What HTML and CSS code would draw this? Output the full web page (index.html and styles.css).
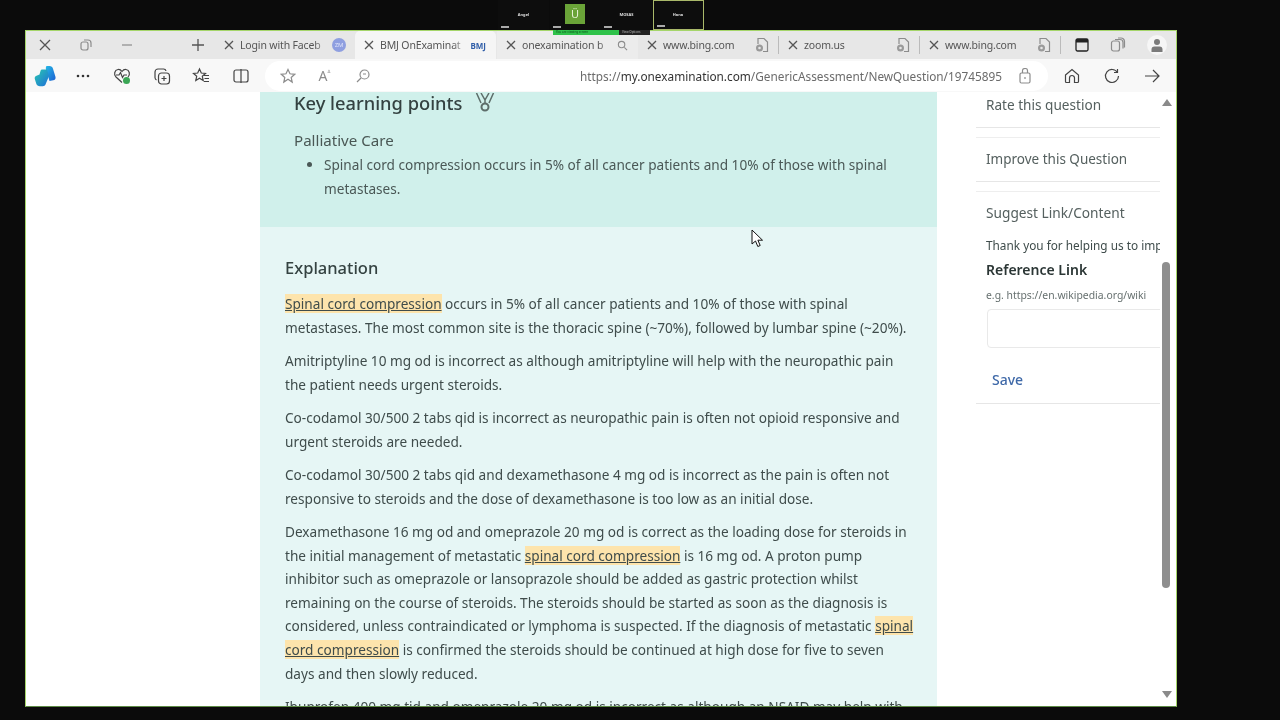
FILE: index.html
```html
<!DOCTYPE html>
<html lang="en">
<head>
<meta charset="utf-8">
<title>BMJ OnExamination</title>
<link rel="stylesheet" href="styles.css">
</head>
<body>
<div class="screen">
  <div class="gallery">
    <div class="thumb"><span class="tname">Angel</span></div>
    <div class="thumb"><span class="tile">Ü</span></div>
    <div class="thumb"><span class="tname">MOSAS</span></div>
    <div class="thumb thumb-on"><span class="tname">Hana</span></div>
  </div>
  <div class="share-bar"><span class="share-green">You are viewing screen</span><span class="share-black">View Options</span></div>
  <div class="window">
    <div class="tabstrip">
      <div class="ctl ctl-x"><svg width="12" height="12" viewBox="0 0 12 12"><path d="M1 1l10 10M11 1L1 11" class="ic"/></svg></div>
      <div class="ctl ctl-r"><svg width="12" height="12" viewBox="0 0 12 12"><rect x="1" y="3" width="7" height="8" rx="2" class="ic-l"/><path d="M4 1h4a3 3 0 0 1 3 3v4" class="ic-l"/></svg></div>
      <div class="ctl ctl-m"><svg width="12" height="12" viewBox="0 0 12 12"><path d="M1 6h10" class="ic-l"/></svg></div>
      <div class="ctl ctl-new"><svg width="14" height="14" viewBox="0 0 14 14"><path d="M7 1v12M1 7h12" class="ic"/></svg></div>
      <div class="tab tab-a"><svg class="tx" width="10" height="10" viewBox="0 0 10 10"><path d="M1 1l8 8M9 1L1 9" class="ic"/></svg><span class="tl">Login with Faceb</span><span class="fav-zm">ZM</span></div>
      <div class="tab tab-on"><svg class="tx" width="10" height="10" viewBox="0 0 10 10"><path d="M1 1l8 8M9 1L1 9" class="ic"/></svg><span class="tl">BMJ OnExaminat</span><span class="fav-bmj">BMJ</span></div>
      <div class="tab tab-c"><svg class="tx" width="10" height="10" viewBox="0 0 10 10"><path d="M1 1l8 8M9 1L1 9" class="ic"/></svg><span class="tl">onexamination b</span><svg width="11" height="11" viewBox="0 0 12 12"><circle cx="5" cy="5" r="3.5" class="ic-l"/><path d="M8 8l3 3" class="ic-l"/></svg></div>
      <div class="tab"><svg class="tx" width="10" height="10" viewBox="0 0 10 10"><path d="M1 1l8 8M9 1L1 9" class="ic"/></svg><span class="tl">www.bing.com</span><svg width="14" height="16" viewBox="0 0 14 16"><path d="M3 7V1.500h6l3.500 3.500v9.500H8" class="ic-l"/><circle cx="4.500" cy="11" r="3.500" fill="#9a9a9a"/><circle cx="4.500" cy="11" r="1.300" fill="#e6e6e6"/></svg></div>
      <div class="tab"><svg class="tx" width="10" height="10" viewBox="0 0 10 10"><path d="M1 1l8 8M9 1L1 9" class="ic"/></svg><span class="tl">zoom.us</span><svg width="14" height="16" viewBox="0 0 14 16"><path d="M3 7V1.500h6l3.500 3.500v9.500H8" class="ic-l"/><circle cx="4.500" cy="11" r="3.500" fill="#9a9a9a"/><circle cx="4.500" cy="11" r="1.300" fill="#e6e6e6"/></svg></div>
      <div class="tab"><svg class="tx" width="10" height="10" viewBox="0 0 10 10"><path d="M1 1l8 8M9 1L1 9" class="ic"/></svg><span class="tl">www.bing.com</span><svg width="14" height="16" viewBox="0 0 14 16"><path d="M3 7V1.500h6l3.500 3.500v9.500H8" class="ic-l"/><circle cx="4.500" cy="11" r="3.500" fill="#9a9a9a"/><circle cx="4.500" cy="11" r="1.300" fill="#e6e6e6"/></svg></div>
      <div class="strip-end">
        <svg width="14" height="14" viewBox="0 0 14 14"><rect x="1" y="1" width="12" height="12" rx="1.500" fill="none" stroke="#222" stroke-width="1.300"/><rect x="1" y="1" width="12" height="3.500" fill="#222"/></svg>
        <svg width="16" height="16" viewBox="0 0 16 16"><rect x="1.500" y="4" width="8" height="10" rx="2" class="ic-l"/><path d="M5 2.500h5a3 3 0 0 1 3 3v6M8 1h3a3.500 3.500 0 0 1 3.500 3.500v6" class="ic-l"/></svg>
        <span class="avatar"><svg width="12" height="14" viewBox="0 0 12 14"><circle cx="6" cy="4" r="3" fill="#7b7b7b"/><path d="M0.500 14v-2.500a3 3 0 0 1 3-3h5a3 3 0 0 1 3 3V14z" fill="#7b7b7b"/></svg></span>
      </div>
    </div>
    <div class="toolbar">
      <div class="tb tb-first"><svg width="22" height="22" viewBox="0 0 22 22"><defs><linearGradient id="cpa" x1="0" y1="0" x2="1" y2="1"><stop offset="0" stop-color="#25b8e6"/><stop offset="1" stop-color="#1b5fd1"/></linearGradient><linearGradient id="cpb" x1="0" y1="0" x2="1" y2="1"><stop offset="0" stop-color="#28c8b0"/><stop offset="1" stop-color="#1f6fd8"/></linearGradient></defs><path d="M12.500 1h3c1.800 0 3 1 3.500 2.800L21.500 12c.4 1.700-.6 3-2.300 3.300L15.500 16 12 4.500C11.700 3 11.800 1.800 12.500 1z" fill="url(#cpa)"/><path d="M8 4.500h5L15 11l-3.500 8.500c-.5 1-1.500 1.700-2.700 1.700H6c-2 0-3.200-1-3.800-2.800L.8 14c-.4-1.500.3-2.700 1.700-3.300L5.500 9.500 6.500 6C6.800 5 7.300 4.500 8 4.500z" fill="url(#cpb)"/></svg></div>
      <div class="tb"><svg width="14" height="4" viewBox="0 0 14 4"><circle cx="2" cy="2" r="1.300" fill="#333"/><circle cx="7" cy="2" r="1.300" fill="#333"/><circle cx="12" cy="2" r="1.300" fill="#333"/></svg></div>
      <div class="tb"><svg width="18" height="18" viewBox="0 0 18 18"><path d="M9 15.500L3 10C.5 7.500 1.500 3 5 2.500c1.700-.2 3 .6 4 2 1-1.400 2.300-2.200 4-2 3.500.5 4.500 5 2 7.500" class="ic-d"/><path d="M3 8h3l1.500-2.500 2 5L11 8h3" class="ic-d"/><circle cx="13.500" cy="13.500" r="3.500" fill="#3aa655"/></svg></div>
      <div class="tb"><svg width="18" height="18" viewBox="0 0 18 18"><rect x="5.500" y="6" width="11" height="11" rx="3" class="ic-d"/><path d="M11 9v5M8.500 11.500h5M3.500 13a3 3 0 0 1-1.500-2.500V5a3 3 0 0 1 3-3h5.500A2.500 2.500 0 0 1 13 4" class="ic-d"/></svg></div>
      <div class="tb"><svg width="18" height="18" viewBox="0 0 18 18"><path d="M7.500 2l1.800 4 4.200.4-3.200 2.900.9 4.200-3.700-2.200-3.700 2.200.9-4.200L1.500 6.400 5.700 6z" class="ic-d"/><path d="M12 8.500h5M12.500 11.500h4.500M12 14.500h5" class="ic-d"/></svg></div>
      <div class="tb"><svg width="18" height="18" viewBox="0 0 18 18"><rect x="2" y="3" width="14" height="12" rx="2" class="ic-d"/><path d="M9 2v14" class="ic-d"/></svg></div>
      <div class="address">
        <div class="addr-left">
          <svg width="16" height="16" viewBox="0 0 16 16"><path d="M8 1.500l2 4.300 4.700.5-3.500 3.200 1 4.600L8 11.300l-4.200 2.800 1-4.600L1.300 6.300 6 5.800z" class="ic-l"/></svg>
          <span class="read-a">A<sup class="read-s">ᐞ</sup></span>
          <svg width="14" height="14" viewBox="0 0 14 14"><circle cx="8.500" cy="5.500" r="4.500" class="ic-l"/><path d="M5 9l-4 4M7 5h3" class="ic-l"/></svg>
        </div>
        <div class="url">https://<b>my.onexamination.com</b>/GenericAssessment/NewQuestion/19745895</div>
        <svg class="lock" width="12" height="16" viewBox="0 0 12 16"><rect x="1" y="5" width="10" height="10" rx="1.500" class="ic-l"/><path d="M3.500 5V2.500a2.500 2 0 0 1 5 0V5M6 9v2" class="ic-l"/></svg>
      </div>
      <div class="tb tb-r"><svg width="16" height="16" viewBox="0 0 16 16"><path d="M1.500 7L8 1.500 14.500 7v6.500a1 1 0 0 1-1 1h-3V10a2.500 2.500 0 0 0-5 0v4.500h-3a1 1 0 0 1-1-1z" class="ic-d"/></svg></div>
      <div class="tb tb-r"><svg width="16" height="16" viewBox="0 0 16 16"><path d="M13.500 4.500A6.500 6.500 0 1 0 14.500 8M13.500 1v3.500H10" class="ic-d"/></svg></div>
      <div class="tb tb-r"><svg width="16" height="14" viewBox="0 0 16 14"><path d="M1 7h14M9 1l6 6-6 6" class="ic-d"/></svg></div>
    </div>
    <div class="viewport">
      <div class="gutter"></div>
      <main class="main">
        <section class="key">
          <h2 class="key-h">Key learning points <svg class="medal" width="20" height="20" viewBox="0 0 20 20"><path d="M1.500 0l4.500 10M18.500 0L14 10M6 0l4 7 4-7M10 7v3" fill="none" stroke="#5d6d6a" stroke-width="1.500"/><circle cx="10" cy="14" r="3.500" fill="none" stroke="#5d6d6a" stroke-width="2"/></svg></h2>
          <p class="key-sub">Palliative Care</p>
          <ul class="key-list"><li>Spinal cord compression occurs in 5% of all cancer patients and 10% of those with spinal metastases.</li></ul>
        </section>
        <section class="expl">
          <h3 class="expl-h">Explanation</h3>
          <p><span class="hl">Spinal cord compression</span> occurs in 5% of all cancer patients and 10% of those with spinal metastases. The most common site is the thoracic spine (~70%), followed by lumbar spine (~20%).</p>
          <p>Amitriptyline 10 mg od is incorrect as although amitriptyline will help with the neuropathic pain the patient needs urgent steroids.</p>
          <p>Co-codamol 30/500 2 tabs qid is incorrect as neuropathic pain is often not opioid responsive and urgent steroids are needed.</p>
          <p>Co-codamol 30/500 2 tabs qid and dexamethasone 4 mg od is incorrect as the pain is often not responsive to steroids and the dose of dexamethasone is too low as an initial dose.</p>
          <p>Dexamethasone 16 mg od and omeprazole 20 mg od is correct as the loading dose for steroids in the initial management of metastatic <span class="hl">spinal cord compression</span> is 16 mg od. A proton pump inhibitor such as omeprazole or lansoprazole should be added as gastric protection whilst remaining on the course of steroids. The steroids should be started as soon as the diagnosis is considered, unless contraindicated or lymphoma is suspected. If the diagnosis of metastatic <span class="hl">spinal cord compression</span> is confirmed the steroids should be continued at high dose for five to seven<br>days and then slowly reduced.</p>
          <p>Ibuprofen 400 mg tid and omeprazole 20 mg od is incorrect as although an NSAID may help with</p>
        </section>
      </main>
      <aside class="side">
        <div class="card card-first">Rate this question</div>
        <div class="card">Improve this Question</div>
        <div class="card card-form">
          <div class="card-title">Suggest Link/Content</div>
          <div class="thanks">Thank you for helping us to improve</div>
          <div class="ref">Reference Link</div>
          <div class="eg">e.g. https://en.wikipedia.org/wiki</div>
          <div class="input"></div>
          <div class="save">Save</div>
        </div>
      </aside>
      <div class="scrollbar">
        <span class="arrow-up"></span>
        <span class="thumbbar"></span>
        <span class="arrow-down"></span>
      </div>
      <svg class="cursor" width="13" height="19" viewBox="0 0 13 19"><path d="M1 1v14l3.500-3 2.300 5.500 2.400-1-2.300-5.300H11.500z" fill="#fff" stroke="#111" stroke-width="1"/></svg>
    </div>
  </div>
</div>
</body>
</html>
```
FILE: styles.css
```css
* { box-sizing: border-box; }
html, body { margin: 0; padding: 0; background: #0b0b0b; }
body { width: 1280px; height: 720px; overflow: hidden; font-family: "Noto Sans", "Liberation Sans", sans-serif; color: #3d4a49; }
.screen { position: relative; width: 1280px; height: 720px; background: #0b0b0b; filter: blur(0.45px); }

.gallery { display: flex; height: 30px; padding-left: 498px; }
.thumb { position: relative; width: 51px; height: 30px; display: flex; align-items: center; justify-content: center; background: #0d0d0d; margin-right: 0.5px; padding-bottom: 1px; }
.thumb::after { content: ""; position: absolute; left: 3px; bottom: 2px; width: 8px; height: 2px; background: #aaa; }
.thumb-on { border: 1px solid #a9b86a; }
.tname { font-size: 4px; font-weight: 700; color: #ddd; }
.tile { width: 20px; height: 20px; background: #6aa338; color: #e8f3d8; font-size: 11px; line-height: 20px; text-align: center; margin-bottom: 1px; }
.share-bar { position: absolute; left: 553px; top: 30px; display: flex; height: 5px; font-size: 3px; line-height: 5px; z-index: 2; }
.share-green { width: 66px; background: #2fc24a; color: #0d4d1c; padding-left: 3px; white-space: nowrap; overflow: hidden; }
.share-black { width: 31px; background: #222; color: #bbb; padding-left: 3px; white-space: nowrap; overflow: hidden; }

.window { margin-left: 25px; width: 1152px; height: 677px; border: 1px solid #a5d56a; border-bottom-color: #5d8a45; background: #fff; display: flex; flex-direction: column; overflow: hidden; }
.ic { fill: none; stroke: #555; stroke-width: 1.300; }
.ic-l { fill: none; stroke: #8c8c8c; stroke-width: 1.200; }
.ic-d { fill: none; stroke: #444; stroke-width: 1.200; }

.tabstrip { height: 28px; background: #e7e7e7; display: flex; align-items: center; flex: none; }
.ctl { height: 28px; display: flex; align-items: center; justify-content: center; flex: none; }
.ctl-x { width: 38px; }
.ctl-r { width: 44px; }
.ctl-m { width: 38px; }
.ctl-new { width: 69px; padding-left: 35px; }
.tab { width: 141px; height: 28px; display: flex; align-items: center; padding: 0 10px 0 9px; font-size: 10.500px; letter-spacing: -0.15px; color: #555; flex: none; position: relative; }
.tab::after { content: ""; position: absolute; right: 0; top: 5px; height: 18px; width: 1px; background: #bbb; }
.tab-a::after, .tab-on::after, .tab-c::after { display: none; }
.tab-a { width: 140px; }
.tab-on { background: #f5f5f5; border-radius: 5px 5px 0 0; }
.tab-c { background: #ececec; width: 141px; margin-left: 1px; }
.tx { flex: none; }
.tl { flex: 1; margin-left: 6px; white-space: nowrap; overflow: hidden; -webkit-mask-image: linear-gradient(90deg, #000 80%, transparent); mask-image: linear-gradient(90deg, #000 80%, transparent); }
.fav-zm { width: 14px; height: 14px; border-radius: 50%; background: #8f9fe0; color: #dfe4fa; font-size: 6px; line-height: 14px; text-align: center; flex: none; margin-right: -1px; }
.fav-bmj { color: #2f5da8; font-size: 8px; font-weight: 700; flex: none; margin-right: 0; letter-spacing: 0; }
.strip-end { flex: 1; display: flex; align-items: center; justify-content: space-between; padding: 0 9px 0 14px; }
.avatar { width: 20px; height: 20px; border-radius: 50%; background: #f6f6f6; display: flex; align-items: flex-end; justify-content: center; padding-bottom: 3px; }

.toolbar { height: 33px; background: #f8f8f8; display: flex; align-items: center; flex: none; padding-right: 4px; }
.tb { width: 39.500px; height: 32px; display: flex; align-items: center; justify-content: center; flex: none; }
.tb-first { width: 37px; }
.tb-r { width: 40px; }
.address { flex: 1; margin: 0 4px; height: 30px; background: #fff; border-radius: 15px; display: flex; align-items: center; padding: 0 17px 0 15px; }
.addr-left { display: flex; align-items: center; gap: 23px; }
.read-a { font-size: 14px; color: #8c8c8c; width: 14px; line-height: 1; }
.read-s { font-size: 7px; vertical-align: top; }
.url { flex: 1; text-align: right; font-size: 11.800px; color: #6b6b6b; white-space: nowrap; padding-right: 17px; }
.url b { font-weight: 400; color: #333; }
.lock { flex: none; }

.viewport { flex: 1; display: flex; position: relative; overflow: hidden; background: #fff; }
.gutter { width: 234px; flex: none; }
.main { width: 677px; flex: none; }
.key { height: 135px; background: #d0f0eb; padding: 0 34px; overflow: hidden; }
.key-h { margin: -1px 0 0; font-size: 18.300px; line-height: 24px; font-weight: 500; color: #344241; display: flex; align-items: center; gap: 13px; }
.medal { flex: none; }
.key-sub { margin: 13px 0 0; font-size: 15.100px; line-height: 24px; color: #4a5855; }
.key-list { margin: 1px 0 0; padding: 0 0 0 30px; font-size: 13.620px; line-height: 23.600px; color: #4a5856; }
.expl { background: #e6f6f5; padding: 29px 22px 0 25px; height: 480px; overflow: hidden; }
.expl-h { margin: 0 0 12px; font-size: 16.500px; line-height: 24px; font-weight: 500; color: #344241; }
.expl p { margin: 0 0 9.800px; font-size: 13.620px; line-height: 23.600px; color: #3f4c4b; }
.hl { background: #fde4ac; text-decoration: underline; }

.side { width: 224px; flex: none; padding: 0 17px 0 39px; overflow: hidden; }
.card { width: 184px; margin-right: -20px; border-bottom: 1px solid #e6e6e6; border-top: 1px solid #eee; padding: 9px 0 10px 10px; font-size: 13.500px; line-height: 24px; color: #55605f; margin-bottom: 9px; white-space: nowrap; overflow: hidden; }
.card-first { border-top: 0; padding-top: 1px; height: 36px; font-size: 13.600px; }
.card-form { height: 213px; padding-bottom: 0; }
.card-title { line-height: 24px; font-size: 13.700px; }
.thanks { font-size: 11.800px; line-height: 18px; margin-top: 11px; color: #3f4c4b; overflow: hidden; }
.ref { font-size: 14px; font-weight: 600; line-height: 22px; margin-top: 5px; color: #2b3635; }
.eg { font-size: 10.400px; line-height: 16px; margin-top: 6px; color: #66706f; }
.input { height: 39px; width: 190px; margin: 6px 0 0 1px; border: 1px solid #e9e9e9; border-radius: 4px; }
.save { font-size: 14px; font-weight: 500; line-height: 22px; margin: 21px 0 0 6px; color: #3f69a8; }

.scrollbar { flex: 1; position: relative; }
.arrow-up, .arrow-down { position: absolute; left: 1px; width: 0; height: 0; border-left: 5px solid transparent; border-right: 5px solid transparent; }
.arrow-up { top: 7px; border-bottom: 7px solid #8a8a8a; }
.arrow-down { bottom: 8px; border-top: 7px solid #8a8a8a; }
.thumbbar { position: absolute; left: 1px; top: 170px; width: 8px; height: 326px; background: #8e8e8e; border-radius: 4px; }
.cursor { position: absolute; left: 725px; top: 137px; }
```
